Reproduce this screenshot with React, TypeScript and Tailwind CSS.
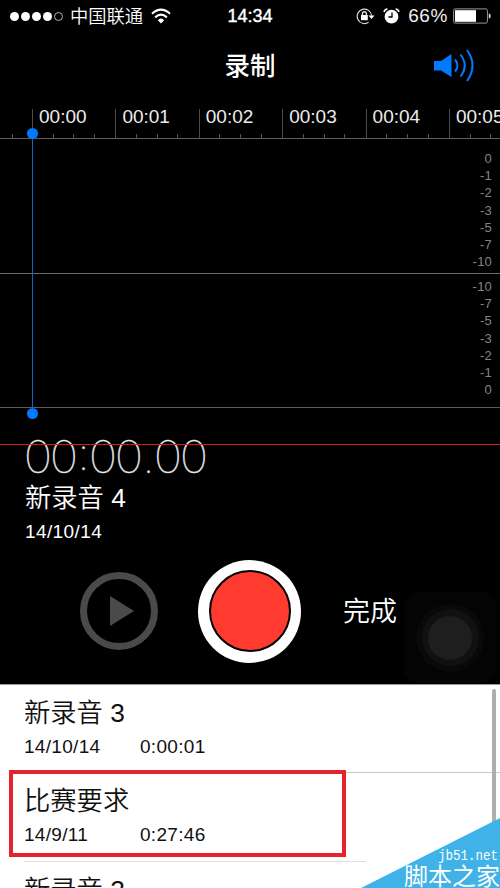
const seconds = ["00:00", "00:01", "00:02", "00:03", "00:04", "00:05"]
const levels = ["0", "-1", "-2", "-3", "-5", "-7", "-10"]
const recordings = [
    { name: "新录音 3", date: "14/10/14", length: "0:00:01" },
    { name: "比赛要求", date: "14/9/11", length: "0:27:46" },
    { name: "新录音 2", date: "14/9/11", length: "0:00:05" },
]

function StatusBar(){
    return (
        <div className="h-8 grid grid-cols-[1fr_60px_1fr] items-center text-[18px] leading-8">
            <div className="flex items-center pl-[10px]">
                <div className="flex gap-[2px]">
                    {[0, 1, 2, 3].map((i) => <span key={i} className="w-[9px] h-[9px] rounded-full bg-white" />)}
                    <span className="w-[9px] h-[9px] rounded-full border border-[#b5b5b5]" />
                </div>
                <span className="ml-[7px] text-[18.3px] font-[350] whitespace-nowrap relative top-px">中国联通</span>
                <svg className="ml-[8px]" width="20" height="16" viewBox="0 0 20 16" fill="none" stroke="#fff" strokeWidth="2.2">
                    <path d="M1 5.8 Q10 -2.4 19 5.8" />
                    <path d="M4.2 9.4 Q10 4 15.8 9.4" />
                    <path d="M10 15.4 L6.8 12.2 Q10 9 13.2 12.2 Z" fill="#fff" stroke="none" />
                </svg>
            </div>
            <span className="text-center [-webkit-text-stroke:0.4px_white]">14:34</span>
            <div className="flex items-center justify-end pr-[9px]">
                <svg width="19" height="17" viewBox="0 0 19 17" fill="none" stroke="#ddd" strokeWidth="1.2">
                    <path d="M12.6 14.2 A7.2 7.2 0 1 1 15.6 7.6" />
                    <path d="M12.4 7.4 H18.6 L15.5 11 Z" fill="#fff" stroke="none" />
                    <rect x="5" y="7" width="6.8" height="5.2" fill="#fff" stroke="none" />
                    <path d="M6.4 7.4 V5.8 A2 2 0 0 1 10.4 5.8 V7.4" strokeWidth="1.4" />
                </svg>
                <svg className="ml-[8px]" width="17" height="16" viewBox="0 0 17 16" fill="none" stroke="#fff">
                    <circle cx="8.5" cy="8.7" r="6.9" fill="#fff" stroke="none" />
                    <path d="M1 4 A4 4 0 0 1 4.4 1.1 M12.6 1.1 A4 4 0 0 1 16 4" strokeWidth="1.5" />
                    <path d="M9 4.5 V9 H5.4" stroke="#000" strokeWidth="1.3" />
                </svg>
                <span className="ml-[8px] text-[19px] tracking-[0.6px] text-[#eee]">66%</span>
                <svg className="ml-[5px]" width="38" height="16" viewBox="0 0 38 16">
                    <rect x="0.6" y="0.9" width="33.8" height="14.2" rx="1.5" fill="none" stroke="#999" />
                    <rect x="2" y="2.2" width="21" height="11.6" fill="#fff" />
                    <path d="M35.8 5.2 A3 3 0 0 1 35.8 10.8 Z" fill="#ddd" />
                </svg>
            </div>
        </div>
    )
}

function Ruler(){
    return (
        <div className="h-[39px] border-b border-[#5c5c5c] flex overflow-hidden">
            <div className="w-[32px] shrink-0 flex items-end">
                <span className="ml-[12px] w-px h-[4px] bg-[#555]" />
            </div>
            {seconds.map((label) => (
                <div key={label} className="w-[83.4px] h-[29px] mt-[9px] shrink-0 border-l border-[#4c4c4c] flex flex-col justify-between">
                    <span className="pl-[6px] text-[19px] leading-[15px] text-[#ececec]">{label}</span>
                    <div className="flex">
                        {[0, 1, 2].map((i) => <span key={i} className="w-[20.7px] h-[4px] border-r border-[#555]" />)}
                    </div>
                </div>
            ))}
        </div>
    )
}

function Levels({ items }: { items: string[] }){
    return (
        <div className="pr-[8px] text-right text-[13px] leading-[17.2px] tracking-[0.2px] text-[#858585]">
            {items.map((level) => <div key={level}>{level}</div>)}
        </div>
    )
}

function Waveform(){
    return (
        <div className="relative">
            <div className="h-[135px] pt-[11px] border-b border-[#6a6a6a]">
                <Levels items={levels} />
            </div>
            <div className="h-[134px] pt-[4px] border-b border-[#5c5c5c]">
                <Levels items={[...levels].reverse()} />
            </div>
            <div className="absolute left-[27px] -top-[11px] h-[291px] w-[11px] flex flex-col items-center">
                <span className="w-[11px] h-[11px] rounded-full bg-[#007aff]" />
                <span className="w-px flex-1 bg-[#1464c4]" />
                <span className="w-[11px] h-[11px] rounded-full bg-[#007aff]" />
            </div>
        </div>
    )
}

const timerCell: Record<string, string> = {
    "0": "w-[26px] flex justify-center scale-x-[1.08]",
    ":": "w-[13px] flex justify-center -translate-y-[3px]",
    ".": "w-[13px] flex justify-center",
}

function Timer(){
    return (
        <div className="flex h-[48px] font-['Inter'] font-thin text-[44.5px] leading-[48px] text-[#f0f0f0] [-webkit-text-stroke:0.4px_#e0e0e0]">
            {"00:00.00".split("").map((char, i) => (
                <span key={i} className={timerCell[char]}>{char}</span>
            ))}
        </div>
    )
}

function Controls(){
    return (
        <div className="h-[134px] flex items-start">
            <div className="ml-[80px] mt-[22px] w-[78px] h-[78px] rounded-full border-[7px] border-[#4a4a4a] flex items-center justify-center">
                <svg className="ml-[6px]" width="24" height="30" viewBox="0 0 24 30">
                    <path d="M0 0 L24 15 L0 30 Z" fill="#4a4a4a" />
                </svg>
            </div>
            <div className="ml-[40px] mt-[9.5px] w-[103px] h-[103px] rounded-full bg-white flex items-center justify-center">
                <div className="w-[82px] h-[82px] rounded-full border-2 border-black bg-[#ff3b30]" />
            </div>
            <span className="ml-[42px] mt-[42px] text-[27px] leading-[40px] font-[350] whitespace-nowrap">完成</span>
        </div>
    )
}

function AssistiveTouch(){
    return (
        <div className="absolute left-[404px] top-[592px] w-[92px] h-[91px] rounded-[14px] bg-[#040404] flex items-center justify-center">
            <div className="w-[68px] h-[68px] rounded-full bg-[#090909] flex items-center justify-center">
                <div className="w-[57px] h-[57px] rounded-full bg-[#111] flex items-center justify-center">
                    <div className="w-[44px] h-[44px] rounded-full bg-[#1e1e1e]" />
                </div>
            </div>
        </div>
    )
}

function Watermark(){
    return (
        <div className="absolute right-0 bottom-0 w-[139px] h-[70px] text-white">
            <svg className="absolute inset-0" width="139" height="70" viewBox="0 0 139 70">
                <path d="M0 70 L139 0 V70 Z" fill="#3fb2e8" />
            </svg>
            <div className="relative h-full flex flex-col items-end justify-end">
                <span className="pr-[2px] font-['Liberation_Mono'] text-[12.5px] leading-[14px] scale-y-[1.2]">jb51.net</span>
                <span className="font-['Noto_Sans_CJK_SC'] text-[24px] leading-[24px] mb-px font-normal whitespace-nowrap">脚本之家</span>
            </div>
        </div>
    )
}

export default function App(){
    return (
        <div className="relative w-[500px] h-[888px] overflow-hidden bg-black text-white antialiased font-['Liberation_Sans','Noto_Sans_CJK_SC',sans-serif]">
            <StatusBar />
            <div className="h-[68px] grid grid-cols-[1fr_auto_1fr] items-center">
                <span />
                <span className="text-[25.5px] leading-[40px] font-medium">录制</span>
                <svg className="justify-self-end mr-[23px]" width="43" height="36" viewBox="0 0 43 36" fill="none" stroke="#007aff" strokeWidth="2">
                    <path d="M0 13 H7 L17.5 6 V29 L7 22.5 H0 Z" fill="#007aff" stroke="none" />
                    <path d="M21 11.5 Q26 17.5 21 23.5" />
                    <path d="M26.5 6.5 Q35 17.5 26.5 28.5" />
                    <path d="M33 2 Q44 17.5 33 33" />
                </svg>
            </div>
            <Ruler />
            <Waveform />
            <div className="h-[142px] pl-[25px] pt-[25px]">
                <Timer />
                <div className="text-[26.3px] leading-[34px] font-[350]">新录音 4</div>
                <div className="text-[19px] leading-[34px] tracking-[0.4px]">14/10/14</div>
            </div>
            <Controls />
            <div className="h-[204px] border-t border-[#999] bg-white text-[#111] overflow-hidden">
                {recordings.map((item) => (
                    <div key={item.name} className="h-[88px] ml-[24px] pt-[11px] border-b border-[#c8c8c8] nth-2:h-[89px] nth-2:border-[#dedede]">
                        <div className="text-[26.3px] leading-[34px] font-[350]">{item.name}</div>
                        <div className="flex text-[19px] leading-[34px] tracking-[0.3px]">
                            <span className="w-[116px]">{item.date}</span>
                            <span>{item.length}</span>
                        </div>
                    </div>
                ))}
            </div>
            <AssistiveTouch />
            <div className="absolute left-0 top-[444px] w-full h-px bg-[#d91a14]" />
            <div className="absolute left-[492px] top-[689px] w-[4px] h-[140px] rounded-full bg-[#aeaeae]" />
            <div className="absolute left-[366px] top-[858px] w-[134px] h-[8px] bg-white" />
            <div className="absolute left-[9px] top-[770px] w-[337px] h-[87px] border-4 border-[#e4232b]" />
            <Watermark />
        </div>
    )
}
